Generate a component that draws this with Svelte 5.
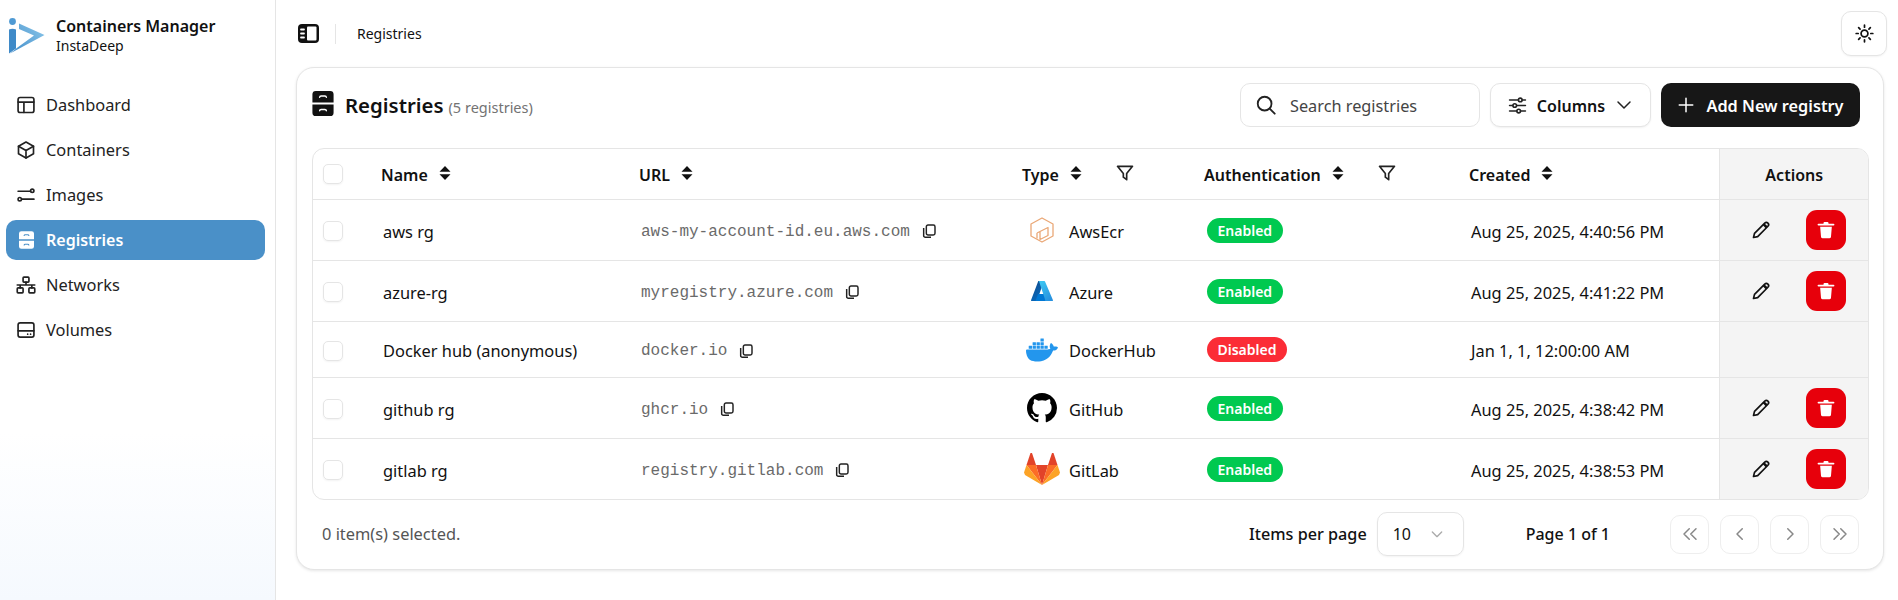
<script>
  const nav = [
    { label: 'Dashboard', icon: 'dash' },
    { label: 'Containers', icon: 'box' },
    { label: 'Images', icon: 'img' },
    { label: 'Registries', icon: 'reg', active: true },
    { label: 'Networks', icon: 'net' },
    { label: 'Volumes', icon: 'vol' }
  ];
  const rows = [
    { name: 'aws rg', url: 'aws-my-account-id.eu.aws.com', type: 'AwsEcr', on: true, date: 'Aug 25, 2025, 4:40:56 PM', act: true },
    { name: 'azure-rg', url: 'myregistry.azure.com', type: 'Azure', on: true, date: 'Aug 25, 2025, 4:41:22 PM', act: true },
    { name: 'Docker hub (anonymous)', url: 'docker.io', type: 'DockerHub', on: false, date: 'Jan 1, 1, 12:00:00 AM', act: false },
    { name: 'github rg', url: 'ghcr.io', type: 'GitHub', on: true, date: 'Aug 25, 2025, 4:38:42 PM', act: true },
    { name: 'gitlab rg', url: 'registry.gitlab.com', type: 'GitLab', on: true, date: 'Aug 25, 2025, 4:38:53 PM', act: true }
  ];
</script>

{#snippet sort()}
  <svg class="sort" viewBox="0 0 12 16" width="12" height="16"><path d="M6 1 11.500 6.800H.5Z M.5 9.200H11.500L6 15Z" fill="#111"/></svg>
{/snippet}
{#snippet filter()}
  <svg class="filter" viewBox="0 0 24 24" width="20" height="20" fill="none" stroke="#222" stroke-width="2" stroke-linejoin="round"><path d="M3 4h18l-7 8.500V20l-4-3v-4.500Z"/></svg>
{/snippet}
{#snippet copy()}
  <svg class="copy" viewBox="0 0 24 24" width="16" height="16" fill="none" stroke="#222" stroke-width="2.200" stroke-linejoin="round"><rect x="8" y="3" width="13" height="15" rx="2.500"/><path d="M4 7.500V19a2.500 2.500 0 0 0 2.500 2.500H15"/></svg>
{/snippet}
{#snippet cabinet(bg, fg)}
  <svg viewBox="0 0 22 26" width="100%" height="100%"><path d="M3.500 0h15A3.500 3.500 0 0 1 22 3.500V12H0V3.500A3.500 3.500 0 0 1 3.500 0ZM0 14h22v8.500A3.500 3.500 0 0 1 18.500 26h-15A3.500 3.500 0 0 1 0 22.500Z" fill={bg}/><path d="M7.500 6.500a1.500 1.500 0 0 1 1.500-1.300h4a1.500 1.500 0 0 1 1.500 1.300M7.500 20.500a1.500 1.500 0 0 1 1.500-1.300h4a1.500 1.500 0 0 1 1.500 1.300" fill="none" stroke={fg} stroke-width="1.500" stroke-linecap="round"/></svg>
{/snippet}
{#snippet navIcon(k)}
  {#if k === 'reg'}
    <span class="cab">{@render cabinet('#fff', '#4a90c8')}</span>
  {:else}
    <svg viewBox="0 0 24 24" width="20" height="20" fill="none" stroke="#222" stroke-width="2" stroke-linecap="round" stroke-linejoin="round">
      {#if k === 'dash'}
        <rect x="2.500" y="3" width="19" height="18" rx="2.500"/><path d="M2.500 8.500h19M9.500 8.500V21"/>
      {:else if k === 'box'}
        <path d="M12 2.500 21 7.500v9L12 21.500 3 16.500v-9Z"/><path d="M3 7.500 12 12.500 21 7.500M12 12.500v9"/>
      {:else if k === 'img'}
        <path d="M2.500 7.500H17"/><circle cx="19.500" cy="7" r="2"/><circle cx="4.500" cy="17" r="2"/><path d="M7 17h14.500"/>
      {:else if k === 'net'}
        <rect x="8.500" y="2.500" width="7" height="6" rx="1"/><rect x="1.500" y="15.500" width="7" height="6" rx="1"/><rect x="15.500" y="15.500" width="7" height="6" rx="1"/><path d="M12 8.500v3.500M1.500 12h21M5 12v3.500M19 12v3.500"/>
      {:else}
        <rect x="2.500" y="3.500" width="19" height="17" rx="2.500"/><path d="M2.500 13h19M14 17h.01M17.500 17h.01"/>
      {/if}
    </svg>
  {/if}
{/snippet}
{#snippet typeIcon(t)}
  {#if t === 'AwsEcr'}
    <svg viewBox="0 0 24 26" width="24" height="26" fill="none" stroke="#eaa877" stroke-width="1.300" stroke-linejoin="round"><path d="M12 1 23 7v12l-11 6-11-6V7Z"/><path d="M10 14.500 18 10.500v8l-8 4ZM10 14.500V22.500M7 16v5.500M10 14.500 7 16"/></svg>
  {:else if t === 'Azure'}
    <svg viewBox="0 0 22 20" width="22" height="20"><defs><linearGradient id="az1" x1="0" y1="0" x2="0.500" y2="1"><stop offset="0" stop-color="#114a8b"/><stop offset="1" stop-color="#0669bc"/></linearGradient><linearGradient id="az2" x1="0" y1="0" x2="0.700" y2="1"><stop offset="0" stop-color="#3ccbf4"/><stop offset="1" stop-color="#2892df"/></linearGradient></defs><path d="M7.300 0H13L6 19.500a.7.7 0 0 1-.6.500H.7a.7.7 0 0 1-.6-.9Z" fill="url(#az1)"/><path d="M15.500 13H7l-2.500 7H17Z" fill="#0078d4"/><path d="M14 .5a.7.7 0 0 0-.7-.5H7.500a.7.7 0 0 1 .6.500l6.300 19a.7.7 0 0 1-.6.500h7.500a.7.7 0 0 0 .6-.9Z" fill="url(#az2)"/></svg>
  {:else if t === 'DockerHub'}
    <svg viewBox="0 0 24 24" width="32" height="32"><path fill="#2396ed" d="M13.983 11.078h2.119a.186.186 0 00.186-.185V9.006a.186.186 0 00-.186-.186h-2.119a.185.185 0 00-.185.185v1.888c0 .102.083.185.185.185m-2.954-5.430h2.118a.186.186 0 00.186-.186V3.574a.186.186 0 00-.186-.185h-2.118a.185.185 0 00-.185.185v1.888c0 .102.082.185.185.185m0 2.716h2.118a.187.187 0 00.186-.186V6.290a.186.186 0 00-.186-.185h-2.118a.185.185 0 00-.185.185v1.887c0 .102.082.185.185.186m-2.930 0h2.120a.186.186 0 00.184-.186V6.290a.185.185 0 00-.185-.185H8.100a.185.185 0 00-.185.185v1.887c0 .102.083.185.185.186m-2.964 0h2.119a.186.186 0 00.185-.186V6.290a.185.185 0 00-.185-.185H5.136a.186.186 0 00-.186.185v1.887c0 .102.084.185.186.186m5.893 2.715h2.118a.186.186 0 00.186-.185V9.006a.186.186 0 00-.186-.186h-2.118a.185.185 0 00-.185.185v1.888c0 .102.082.185.185.185m-2.930 0h2.120a.185.185 0 00.184-.185V9.006a.185.185 0 00-.184-.186h-2.120a.185.185 0 00-.184.185v1.888c0 .102.083.185.185.185m-2.964 0h2.119a.185.185 0 00.185-.185V9.006a.185.185 0 00-.184-.186h-2.120a.186.186 0 00-.186.186v1.887c0 .102.084.185.186.185m-2.920 0h2.120a.185.185 0 00.184-.185V9.006a.185.185 0 00-.184-.186h-2.120a.185.185 0 00-.185.186v1.887c0 .102.082.185.185.185M23.763 9.890c-.065-.051-.672-.510-1.954-.510-.338.001-.676.030-1.010.087-.248-1.700-1.653-2.530-1.716-2.566l-.344-.199-.226.327c-.284.438-.490.922-.612 1.430-.230.970-.090 1.882.403 2.661-.595.332-1.550.413-1.744.420H.751a.751.751 0 00-.750.748 11.376 11.376 0 00.692 4.062c.545 1.428 1.355 2.480 2.410 3.124 1.180.723 3.100 1.137 5.275 1.137.983.003 1.963-.086 2.930-.266a12.248 12.248 0 003.823-1.389c.980-.567 1.860-1.288 2.610-2.136 1.252-1.418 1.998-2.997 2.553-4.400h.221c1.372 0 2.215-.549 2.680-1.009.309-.293.550-.650.707-1.046l.098-.288z"/></svg>
  {:else if t === 'GitHub'}
    <svg viewBox="0 0 16 16" width="30" height="30"><path fill="#000" d="M8 0C3.580 0 0 3.580 0 8c0 3.540 2.290 6.530 5.470 7.590.400.070.550-.170.550-.380 0-.190-.010-.820-.010-1.490-2.010.370-2.530-.490-2.690-.940-.090-.230-.480-.940-.820-1.130-.280-.150-.680-.520-.010-.530.630-.010 1.080.580 1.230.820.720 1.210 1.870.870 2.330.660.070-.520.280-.870.510-1.070-1.780-.200-3.640-.890-3.640-3.950 0-.870.310-1.590.820-2.150-.080-.200-.360-1.020.080-2.120 0 0 .670-.210 2.200.820.640-.180 1.320-.270 2-.270.680 0 1.360.090 2 .270 1.530-1.040 2.200-.820 2.200-.820.440 1.100.160 1.920.080 2.120.510.560.820 1.270.820 2.150 0 3.070-1.870 3.750-3.650 3.950.290.250.540.730.540 1.480 0 1.070-.010 1.930-.010 2.200 0 .210.150.460.550.380A8.013 8.013 0 0016 8c0-4.420-3.580-8-8-8z"/></svg>
  {:else}
    <svg viewBox="0 0 36 32" width="36" height="32"><path d="M12 12h12L18 32Z" fill="#e24329"/><path d="M2.500 12H12l6 20Z" fill="#fc6d26"/><path d="M33.500 12H24l-6 20Z" fill="#fc6d26"/><path d="M2.500 12 0 19.500 1 22l17 10Z" fill="#fca326"/><path d="M33.500 12 36 19.500 35 22 18 32Z" fill="#fca326"/><path d="M6.500 0 2.500 12H12L8 0Z" fill="#e24329"/><path d="M29.500 0 33.500 12H24L28 0Z" fill="#e24329"/></svg>
  {/if}
{/snippet}

<div class="app">
  <aside class="sidebar">
    <div class="brand">
      <svg class="logo" viewBox="0 0 36 36" width="36" height="36"><defs><linearGradient id="lg" x1="0" y1="1" x2="1" y2="0.300"><stop offset="0" stop-color="#3f8ac8"/><stop offset="1" stop-color="#82c0e6"/></linearGradient></defs><circle cx="3.500" cy="3.500" r="3.400" fill="#4f9ad4"/><path d="M0 11.500Q3.500 10 7 11.500V30.500L0 35.500Z" fill="#3f8ac8"/><path d="M10 5.500 35.500 17 1 35.500 8.500 29.500 25 17.500 10 11Z" fill="url(#lg)"/></svg>
      <div class="brand-text">
        <strong>Containers Manager</strong>
        <span>InstaDeep</span>
      </div>
    </div>
    <nav>
      {#each nav as n}
        <a href="#top" class="item" class:active={n.active}>
          <span class="ni">{@render navIcon(n.icon)}</span>
          <span class="nl">{n.label}</span>
        </a>
      {/each}
    </nav>
  </aside>

  <main>
    <header>
      <svg viewBox="0 0 22 20" width="22" height="20"><rect x="0" y="0" width="21" height="19" rx="4" fill="#111"/><rect x="9" y="2.500" width="9.500" height="14" rx="1" fill="#fff"/><path d="M3 5.500h3M3 9.500h3M3 13.500h3" stroke="#fff" stroke-width="1.800" stroke-linecap="round"/></svg>
      <span class="sep"></span>
      <span class="crumb">Registries</span>
      <button class="theme" aria-label="Toggle theme">
        <svg viewBox="0 0 24 24" width="19" height="19" fill="none" stroke="#111" stroke-width="2.200" stroke-linecap="round"><circle cx="12" cy="12" r="4.300"/><path d="M12 1.500v2.500M12 20v2.500M1.500 12H4M20 12h2.500M4.600 4.600l1.800 1.800M17.600 17.600l1.800 1.800M4.600 19.400l1.800-1.800M17.600 6.400l1.800-1.800"/></svg>
      </button>
    </header>

    <section class="card">
      <div class="toolbar">
        <span class="ticon">{@render cabinet('#111', '#fff')}</span>
        <h1>Registries</h1>
        <span class="count">(5 registries)</span>
        <div class="search">
          <svg viewBox="0 0 24 24" width="22" height="22" fill="none" stroke="#222" stroke-width="2" stroke-linecap="round"><circle cx="10.500" cy="10.500" r="7.500"/><path d="m16 16 5.500 5.500"/></svg>
          <span>Search registries</span>
        </div>
        <button class="cols">
          <svg viewBox="0 0 24 24" width="19" height="19" fill="none" stroke="#222" stroke-width="2" stroke-linecap="round"><path d="M2 5h11M18 5h4M2 12h4M11 12h11M2 19h9M16 19h6"/><circle cx="15.500" cy="5" r="2.300"/><circle cx="8.500" cy="12" r="2.300"/><circle cx="13.500" cy="19" r="2.300"/></svg>
          <span class="lbl">Columns</span>
          <svg viewBox="0 0 24 24" width="18" height="18" fill="none" stroke="#222" stroke-width="2" stroke-linecap="round" stroke-linejoin="round"><path d="m4 8 8 8 8-8"/></svg>
        </button>
        <button class="add">
          <svg viewBox="0 0 24 24" width="18" height="18" fill="none" stroke="#fff" stroke-width="2" stroke-linecap="round"><path d="M12 3v18M3 12h18"/></svg>
          <span class="lbl">Add New registry</span>
        </button>
      </div>

      <div class="tw">
        <table>
          <colgroup>
            <col style="width:60px"/><col style="width:258px"/><col style="width:383px"/><col style="width:182px"/><col style="width:265px"/><col style="width:258px"/><col style="width:150px"/>
          </colgroup>
          <thead>
            <tr>
              <th class="ck"><span class="box"></span></th>
              <th><span class="h"><span class="lbl">Name</span> {@render sort()}</span></th>
              <th><span class="h"><span class="lbl">URL</span> {@render sort()}</span></th>
              <th><span class="h"><span class="lbl">Type</span> {@render sort()} <span class="fgap">{@render filter()}</span></span></th>
              <th><span class="h"><span class="lbl">Authentication</span> {@render sort()} <span class="fgap">{@render filter()}</span></span></th>
              <th><span class="h"><span class="lbl">Created</span> {@render sort()}</span></th>
              <th class="act center"><span class="lbl">Actions</span></th>
            </tr>
          </thead>
          <tbody>
            {#each rows as r}
              <tr class:short={!r.act}>
                <td class="ck"><span class="box"></span></td>
                <td class="p"><span class="lbl">{r.name}</span></td>
                <td class="p"><span class="url"><code>{r.url}</code>{@render copy()}</span></td>
                <td><span class="type"><span class="tic">{@render typeIcon(r.type)}</span><span class="lbl">{r.type}</span></span></td>
                <td class="p"><span class="badge" class:off={!r.on}>{r.on ? 'Enabled' : 'Disabled'}</span></td>
                <td class="p"><span class="lbl">{r.date}</span></td>
                <td class="act">
                  {#if r.act}
                    <div class="btns">
                      <svg viewBox="0 0 24 24" width="20" height="20" fill="none" stroke="#111" stroke-width="2" stroke-linejoin="round"><path d="M3 21l1.200-5L16.500 3.700a2.400 2.400 0 0 1 3.800 3.800L8 20Z"/><path d="M15 5l4 4" stroke-width="3"/></svg>
                      <button class="del" aria-label="Delete">
                        <svg viewBox="0 0 24 24" width="20" height="20"><path d="M3 5.500h18" stroke="#fff" stroke-width="2.200" stroke-linecap="round"/><path d="M9 5V3.800A1.300 1.300 0 0 1 10.300 2.500h3.400A1.300 1.300 0 0 1 15 3.800V5" fill="#fff"/><path d="M5 8h14l-1 12a2 2 0 0 1-2 1.800H8A2 2 0 0 1 6 20Z" fill="#fff"/></svg>
                      </button>
                    </div>
                  {/if}
                </td>
              </tr>
            {/each}
          </tbody>
        </table>
      </div>

      <div class="foot">
        <span class="sel">0 item(s) selected.</span>
        <span class="ipp">Items per page</span>
        <div class="select">10
          <svg viewBox="0 0 24 24" width="16" height="16" fill="none" stroke="#aaa" stroke-width="2" stroke-linecap="round" stroke-linejoin="round"><path d="m5 9 7 7 7-7"/></svg>
        </div>
        <span class="page">Page 1 of 1</span>
        <div class="pager">
          <button aria-label="First"><svg viewBox="0 0 24 24" fill="none" stroke="#888" stroke-width="2" stroke-linecap="round" stroke-linejoin="round"><path d="m11 5-7 7 7 7M20 5l-7 7 7 7"/></svg></button>
          <button aria-label="Previous"><svg viewBox="0 0 24 24" fill="none" stroke="#888" stroke-width="2" stroke-linecap="round" stroke-linejoin="round"><path d="m15 5-7 7 7 7"/></svg></button>
          <button aria-label="Next"><svg viewBox="0 0 24 24" fill="none" stroke="#888" stroke-width="2" stroke-linecap="round" stroke-linejoin="round"><path d="m9 5 7 7-7 7"/></svg></button>
          <button aria-label="Last"><svg viewBox="0 0 24 24" fill="none" stroke="#888" stroke-width="2" stroke-linecap="round" stroke-linejoin="round"><path d="m4 5 7 7-7 7M13 5l7 7-7 7"/></svg></button>
        </div>
      </div>
    </section>
  </main>
</div>

<style>
  :global(body) { margin: 0; background: #fff; }
  .app { display: flex; height: 600px; overflow: hidden; font-family: "Noto Sans", sans-serif; font-size: 16px; color: #111; }
  .sidebar { width: 275px; box-sizing: content-box; border-right: 1px solid #e5e5e5; background: linear-gradient(to bottom, #fff 72%, #f5f9fe 100%); }
  .brand { display: flex; align-items: center; gap: 11px; height: 36px; padding: 18px 0 0 9px; }
  .brand-text { display: flex; flex-direction: column; line-height: 20px; }
  .brand-text strong { font-size: 16px; font-weight: 600; }
  .brand-text span { font-size: 14px; }
  nav { display: flex; flex-direction: column; gap: 5px; margin-top: 31px; padding: 0 10px 0 6px; }
  .item { display: flex; align-items: center; height: 40px; border-radius: 10px; padding-left: 10px; color: #222; text-decoration: none; gap: 10px; font-size: 16.400px; }
  .nl { position: relative; top: -1px; }
  .item.active { background: #4a90c8; color: #fff; font-weight: 600; font-size: 16px; }
  .item.active .nl { top: 0; }
  .ni { width: 20px; height: 20px; display: flex; align-items: center; justify-content: center; }
  .cab { width: 15px; height: 18px; display: block; }
  main { flex: 1; padding: 0 14px 0 20px; min-width: 0; }
  header { height: 67px; display: flex; align-items: center; position: relative; padding-left: 2px; }
  .sep { width: 1px; height: 20px; background: #e5e5e5; margin: 0 21px 0 15px; }
  .crumb { font-size: 14px; }
  .theme { margin-left: auto; margin-right: -3px; width: 46px; height: 45px; border: 1px solid #e5e5e5; border-radius: 10px; background: #fff; display: flex; align-items: center; justify-content: center; box-shadow: 0 1px 2px rgba(0,0,0,.05); padding: 0; }
  .card { height: 503px; box-sizing: border-box; border: 1px solid #e5e5e5; border-radius: 18px; box-shadow: 0 1px 3px rgba(0,0,0,.1); padding: 15px 14px 0 15px; background: #fff; }
  .toolbar { display: flex; align-items: center; height: 44px; padding-right: 9px; }
  .ticon { width: 22px; height: 25px; display: block; margin-top: -4px; }
  h1 { font-size: 20.400px; font-weight: 600; margin: 0 0 0 11px; }
  .count { font-size: 14.500px; color: #737373; margin-left: 5px; margin-top: 4px; flex: 1; }
  .search { width: 240px; height: 44px; box-sizing: border-box; border: 1px solid #e5e5e5; border-radius: 10px; display: flex; align-items: center; gap: 13px; padding-left: 14px; margin-left: -1px; color: #444; }
  .search span { position: relative; top: 1px; font-size: 16.300px; }
  button { font-family: inherit; font-size: 16px; cursor: pointer; }
  .lbl { position: relative; top: 1px; }
  .cols { margin-left: 10px; width: 161px; height: 44px; border: 1px solid #e5e5e5; border-radius: 10px; background: #fff; color: #111; font-weight: 600; display: flex; align-items: center; justify-content: center; gap: 10px; box-shadow: 0 1px 2px rgba(0,0,0,.06); padding: 0; }
  .add { margin-left: 10px; width: 199px; height: 44px; border: 0; border-radius: 10px; background: #171717; color: #fff; font-weight: 600; display: flex; align-items: center; justify-content: center; gap: 11px; padding: 0; font-size: 16.300px; }
  .tw { margin-top: 21px; border: 1px solid #e5e5e5; border-radius: 12px; overflow: hidden; }
  table { width: 100%; table-layout: fixed; border-collapse: collapse; }
  tr { border-bottom: 1px solid #e5e5e5; }
  tbody tr:last-child { border-bottom: 0; }
  th { height: 50px; padding: 0 0 0 8px; text-align: left; font-weight: 600; font-size: 16px; }
  td { height: 60px; padding: 0; font-size: 16.400px; }
  tr.short td { height: 55px; }
  .h { display: inline-flex; align-items: center; gap: 11px; }
  .sort { margin-top: -2px; }
  .fgap { display: inline-flex; margin-left: 22px; margin-top: -3px; }
  .ck { padding: 0 0 0 10px; }
  .box { display: block; width: 20px; height: 20px; border: 1px solid #e5e5e5; border-radius: 5px; box-shadow: 0 1px 2px rgba(0,0,0,.05); box-sizing: border-box; position: relative; top: 1px; }
  th .box { top: 0; }
  .p { padding-left: 10px; }
  .url { display: inline-flex; align-items: center; gap: 11px; position: relative; top: -1px; }
  .url svg { margin-top: -1px; }
  code { font-family: "Liberation Mono", monospace; font-size: 16px; color: #6a6a6a; }
  .type { display: flex; align-items: center; }
  .tic { width: 55px; display: flex; justify-content: center; flex: none; }
  .badge { display: inline-flex; align-items: center; height: 25px; padding: 0 10.500px; margin-left: 1px; border-radius: 13px; background: #00c950; color: #fff; font-size: 14px; font-weight: 600; }
  .badge.off { background: #fb2c36; }
  .act { background: #f4f4f4; border-left: 1px solid #e5e5e5; }
  th.center { text-align: center; padding: 0; }
  .btns { display: flex; align-items: center; padding-left: 31px; gap: 35px; }
  .del { width: 40px; height: 40px; border: 0; border-radius: 11px; background: #e7000b; display: flex; align-items: center; justify-content: center; padding: 0; }
  .foot { display: flex; align-items: center; height: 68px; padding: 0 10px 0 10px; }
  .sel { color: #555; font-size: 16.400px; flex: 1; position: relative; top: -1px; }
  .ipp { font-weight: 500; font-size: 16.200px; }
  .select { width: 87px; height: 44px; box-sizing: border-box; margin-left: 10px; border: 1px solid #e5e5e5; border-radius: 10px; display: flex; align-items: center; justify-content: space-between; padding: 0 18px 0 15px; box-shadow: 0 1px 2px rgba(0,0,0,.05); }
  .page { font-weight: 500; margin-left: 62px; }
  .pager { display: flex; gap: 11px; margin-left: 60px; }
  .pager button { width: 39px; height: 39px; border: 1px solid #eee; border-radius: 10px; background: #fff; padding: 0; display: flex; align-items: center; justify-content: center; }
  .pager svg { width: 18px; height: 18px; }
</style>
